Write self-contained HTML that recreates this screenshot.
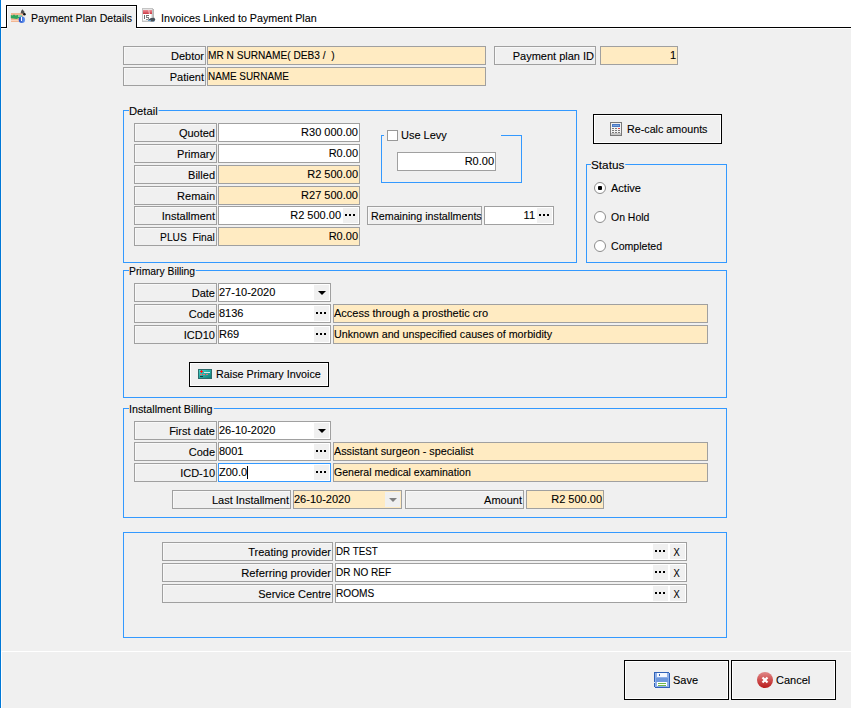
<!DOCTYPE html>
<html><head><meta charset="utf-8"><style>
*{margin:0;padding:0;box-sizing:border-box}
html,body{width:851px;height:708px;overflow:hidden;background:#f0f0f0;font-family:"Liberation Sans",sans-serif;font-size:11px;color:#000;-webkit-text-stroke:0.1px #000}
div{position:absolute}
.s{display:inline-block}
.lb{border:1px solid #a0a0a0;background:#f0f0f0;text-align:right;line-height:17px;padding-right:1px;padding-top:1px;white-space:nowrap;box-shadow:inset 1px 1px 0 #f8f8f8}
.vf{border:1px solid #a0a0a0;background:#fff;line-height:17px;white-space:nowrap;overflow:hidden}
.vf.pe{background:#ffebc2}
.vf.fo{border-color:#3399ff}
.tx{position:static;padding-left:0;padding-top:0}
.bt{top:1px;width:15px;height:15px;background:#f0f0f0}
.bt i{position:absolute;top:6px;width:2px;height:2px;background:#000}
.bt .arr{position:absolute;left:4px;top:6px;width:0;height:0;border-left:4px solid transparent;border-right:4px solid transparent;border-top:4px solid #000}
.bt .arr.g{border-top-color:#808080}
.bt.X{text-align:center;line-height:17px}
.bt.X span{display:inline-block;transform:scaleX(0.85);margin-left:-2px}
.gb{border:1px solid #3399ff}
.gt{line-height:13px;white-space:nowrap}
.gt>span{background:#f0f0f0;padding-right:1px;display:inline-block}
.btn{border:1px solid #000;background:#f0f0f0;box-shadow:inset 1px 1px 0 #fff, inset -1px -1px 0 #fff}
.bl{white-space:nowrap;line-height:13px}
.caret{display:inline-block;width:1px;height:13px;background:#000;vertical-align:-3px}
</style></head>
<body>
<div style="left:0;top:0;width:851px;height:27px;background:#fff"></div>
<div style="left:0;top:27px;width:851px;height:1px;background:#000"></div>
<div style="left:1px;top:28px;width:850px;height:1px;background:#fff"></div>
<div style="left:6px;top:5px;width:131px;height:23px;border:1px solid #000;border-bottom:none;background:#f0f0f0;box-shadow:inset 1px 1px 0 #fff"></div>
<div style="left:7px;top:27px;width:129px;height:2px;background:#f0f0f0"></div>
<div style="left:1px;top:28px;width:1px;height:624px;background:#f8f6f4"></div>
<div style="left:1px;top:651px;width:1px;height:57px;background:#fff"></div>
<div style="left:0;top:0;width:1px;height:708px;background:#0078d7"></div>
<div class="bl" style="left:31px;top:12px"><span class="s" style="transform:scaleX(0.96);transform-origin:left">Payment Plan Details</span></div>
<div class="bl" style="left:161px;top:12px"><span class="s" style="transform:scaleX(0.975);transform-origin:left">Invoices Linked to Payment Plan</span></div>
<svg style="position:absolute;left:9px;top:7px" width="18" height="18" viewBox="0 0 18 18" shape-rendering="crispEdges"><defs><linearGradient id="ib" x1="0" y1="0" x2="1" y2="0"><stop offset="0" stop-color="#1a46c0"/><stop offset="1" stop-color="#6c9ef6"/></linearGradient></defs><rect x="1.6" y="5.9" width="12.4" height="4" fill="#f2b794"/><rect x="1.6" y="9.9" width="8.6" height="5.2" fill="#f2b794"/><rect x="2" y="13" width="8" height="1" fill="#fbd6c0"/><path d="M1.8 8 L3.5 8.6 L5 7.6 L6.5 8.6 L8.5 7.9 L12.5 8 L12.5 10.3 L10 11 L7.5 12 L4.5 11.6 L1.8 11.2 Z" fill="#2fa65c" shape-rendering="auto"/><rect x="8.5" y="8.2" width="4" height="1.8" fill="#8ed3a6"/><path d="M13.4 2.2 L15.2 4.6 L15.8 7 L11.6 6.2 L12.2 4 Z" fill="#505050" shape-rendering="auto"/><circle cx="15.4" cy="7.2" r="1.3" fill="#111" shape-rendering="auto"/><circle cx="12.9" cy="12.8" r="3.2" fill="url(#ib)" shape-rendering="auto"/><rect x="12.2" y="11.2" width="1" height="2.6" fill="#fff"/><rect x="12.2" y="10.3" width="1" height="0.6" fill="#fff"/></svg>
<svg style="position:absolute;left:140px;top:6px" width="18" height="18" viewBox="0 0 18 18" shape-rendering="crispEdges"><defs><linearGradient id="cr" x1="0" y1="0" x2="0" y2="1"><stop offset="0" stop-color="#ec9098"/><stop offset="1" stop-color="#c8323c"/></linearGradient></defs><rect x="4" y="3" width="9.7" height="13.3" fill="#b8b8b8"/><rect x="2" y="1.8" width="10.5" height="14.5" fill="#c4c4c4"/><rect x="3" y="3" width="9" height="11.5" fill="#e6e6e6"/><rect x="3" y="3.8" width="8.7" height="4.6" fill="url(#cr)"/><path d="M8.2 3.8 L9.2 3.8 L10 8.4 L9 8.4 Z" fill="#f4c8cc" shape-rendering="auto"/><rect x="3" y="8.4" width="8" height="5.1" fill="#ffffff"/><rect x="4" y="9" width="1" height="4" fill="#707070"/><rect x="6" y="9" width="3" height="1" fill="#707070"/><rect x="6" y="10" width="1" height="1" fill="#909090"/><rect x="6" y="11" width="3" height="1" fill="#808080"/><rect x="8" y="12" width="1" height="1" fill="#909090"/><rect x="6" y="13" width="2" height="1" fill="#909090"/><path d="M8 13.8 L11 12 L14.3 11.8 L15.3 13.5 L14.3 15.6 L11.5 15.4 L9 14.8 Z" fill="#48525c" shape-rendering="auto"/><rect x="8.3" y="13.8" width="2.5" height="1" fill="#6a9cc4"/><rect x="12.5" y="14.6" width="1.5" height="1" fill="#6a9cc4"/></svg>
<div class="lb" style="left:123px;top:46px;width:83px;height:19px;">Debtor</div>
<div class="vf pe" style="left:207px;top:46px;width:279px;height:19px;"><div class="tx" style=""><span class="s" style="transform:scaleX(0.92);transform-origin:left">MR N SURNAME( DEB3 /&nbsp; )</span></div></div>
<div class="lb" style="left:123px;top:67px;width:83px;height:19px;">Patient</div>
<div class="vf pe" style="left:207px;top:67px;width:279px;height:19px;"><div class="tx" style=""><span class="s" style="transform:scaleX(0.9);transform-origin:left">NAME SURNAME</span></div></div>
<div class="lb" style="left:494px;top:46px;width:102px;height:19px;">Payment plan ID</div>
<div class="vf pe" style="left:600px;top:46px;width:78px;height:19px;"><div class="tx" style="text-align:right;padding-right:1px;">1</div></div>
<div class="gb" style="left:123px;top:110px;width:454px;height:153px;"></div>
<div class="gt" style="left:129px;top:105px"><span style="transform:scaleX(1.02);transform-origin:left">Detail</span></div>
<div class="lb" style="left:134px;top:123px;width:83px;height:19px;">Quoted</div>
<div class="vf" style="left:218px;top:123px;width:142px;height:19px;"><div class="tx" style="text-align:right;padding-right:1px;">R30 000.00</div></div>
<div class="lb" style="left:134px;top:144px;width:83px;height:19px;">Primary</div>
<div class="vf" style="left:218px;top:144px;width:142px;height:19px;"><div class="tx" style="text-align:right;padding-right:1px;">R0.00</div></div>
<div class="lb" style="left:134px;top:165px;width:83px;height:19px;">Billed</div>
<div class="vf pe" style="left:218px;top:165px;width:142px;height:19px;"><div class="tx" style="text-align:right;padding-right:1px;">R2 500.00</div></div>
<div class="lb" style="left:134px;top:186px;width:83px;height:19px;">Remain</div>
<div class="vf pe" style="left:218px;top:186px;width:142px;height:19px;"><div class="tx" style="text-align:right;padding-right:1px;">R27 500.00</div></div>
<div class="lb" style="left:134px;top:206px;width:83px;height:19px;">Installment</div>
<div class="vf" style="left:218px;top:206px;width:142px;height:19px;"><div class="tx" style="text-align:right;padding-right:18px;">R2 500.00</div><div class="bt" style="left:124px"><i style="left:2px"></i><i style="left:6px"></i><i style="left:10px"></i></div></div>
<div class="lb" style="left:134px;top:227px;width:83px;height:19px;"><span class="s" style="transform:scaleX(0.93);transform-origin:right">PLUS&nbsp; Final</span></div>
<div class="vf pe" style="left:218px;top:227px;width:142px;height:19px;"><div class="tx" style="text-align:right;padding-right:1px;">R0.00</div></div>
<div class="lb" style="left:367px;top:206px;width:115px;height:19px;"><span class="s" style="transform:scaleX(0.973);transform-origin:right">Remaining installments</span></div>
<div class="vf" style="left:484px;top:206px;width:70px;height:19px;"><div class="tx" style="text-align:right;padding-right:18px;">11</div><div class="bt" style="left:52px"><i style="left:2px"></i><i style="left:6px"></i><i style="left:10px"></i></div></div>
<div class="gb" style="left:381px;top:135px;width:141px;height:48px;"></div>
<div style="left:384px;top:129px;width:117px;height:12px;background:#f0f0f0"></div>
<div style="left:387px;top:130px;width:11px;height:11px;border:1px solid #999;background:#fff"></div>
<div class="bl" style="left:401px;top:129px">Use Levy</div>
<div class="vf" style="left:397px;top:152px;width:99px;height:19px;"><div class="tx" style="text-align:right;padding-right:1px;">R0.00</div></div>
<div class="btn" style="left:593px;top:114px;width:129px;height:30px;"></div>
<svg style="position:absolute;left:610px;top:122px" width="12" height="14" viewBox="0 0 12 14" shape-rendering="crispEdges"><rect x="0" y="0" width="12" height="14" fill="#787878"/><rect x="1" y="1" width="10" height="12" fill="#f2f2f2"/><rect x="1" y="11" width="10" height="2" fill="#c4c4c4"/><rect x="2" y="2" width="8" height="3" fill="#4a7ac4"/><rect x="3" y="3" width="6" height="1" fill="#7aa0dc"/><rect x="2" y="6" width="2" height="1" fill="#7a7a7a"/><rect x="5" y="6" width="2" height="1" fill="#7a7a7a"/><rect x="8" y="6" width="2" height="1" fill="#e04848"/><rect x="2" y="8" width="2" height="1" fill="#7a7a7a"/><rect x="5" y="8" width="2" height="1" fill="#7a7a7a"/><rect x="8" y="8" width="2" height="1" fill="#7a7a7a"/><rect x="2" y="10" width="2" height="1" fill="#7a7a7a"/><rect x="5" y="10" width="2" height="1" fill="#7a7a7a"/><rect x="8" y="10" width="2" height="1" fill="#7a7a7a"/></svg>
<div class="bl" style="left:627px;top:123px"><span class="s" style="transform:scaleX(0.975);transform-origin:left">Re-calc amounts</span></div>
<div class="gb" style="left:586px;top:164px;width:141px;height:99px;"></div>
<div class="gt" style="left:591px;top:159px"><span style="transform:scaleX(1.07);transform-origin:left">Status</span></div>
<div style="left:594px;top:182px;width:12px;height:12px;border:1px solid #8c8c8c;border-radius:50%;background:#fff"></div>
<div style="left:598px;top:186px;width:4px;height:4px;border-radius:1px;background:#000"></div>
<div class="bl" style="left:611px;top:182px">Active</div>
<div style="left:594px;top:211px;width:12px;height:12px;border:1px solid #8c8c8c;border-radius:50%;background:#fff"></div>
<div class="bl" style="left:611px;top:211px"><span class="s" style="transform:scaleX(0.95);transform-origin:left">On Hold</span></div>
<div style="left:594px;top:240px;width:12px;height:12px;border:1px solid #8c8c8c;border-radius:50%;background:#fff"></div>
<div class="bl" style="left:611px;top:240px"><span class="s" style="transform:scaleX(0.96);transform-origin:left">Completed</span></div>
<div class="gb" style="left:123px;top:270px;width:604px;height:128px;"></div>
<div class="gt" style="left:129px;top:265px"><span style="transform:scaleX(0.94);transform-origin:left">Primary Billing</span></div>
<div class="lb" style="left:134px;top:283px;width:83px;height:19px;">Date</div>
<div class="vf" style="left:218px;top:283px;width:113px;height:19px;"><div class="tx" style="">27-10-2020</div><div class="bt" style="left:95px"><b class="arr"></b></div></div>
<div class="lb" style="left:134px;top:304px;width:83px;height:19px;">Code</div>
<div class="vf" style="left:218px;top:304px;width:113px;height:19px;"><div class="tx" style="">8136</div><div class="bt" style="left:95px"><i style="left:2px"></i><i style="left:6px"></i><i style="left:10px"></i></div></div>
<div class="vf pe" style="left:333px;top:304px;width:375px;height:19px;"><div class="tx" style="">Access through a prosthetic cro</div></div>
<div class="lb" style="left:134px;top:325px;width:83px;height:19px;">ICD10</div>
<div class="vf" style="left:218px;top:325px;width:113px;height:19px;"><div class="tx" style="">R69</div><div class="bt" style="left:95px"><i style="left:2px"></i><i style="left:6px"></i><i style="left:10px"></i></div></div>
<div class="vf pe" style="left:333px;top:325px;width:375px;height:19px;"><div class="tx" style=""><span class="s" style="transform:scaleX(0.975);transform-origin:left">Unknown and unspecified causes of morbidity</span></div></div>
<div class="btn" style="left:189px;top:362px;width:140px;height:25px;"></div>
<svg style="position:absolute;left:198px;top:369px" width="14" height="10" viewBox="0 0 14 10" shape-rendering="crispEdges"><defs><linearGradient id="tg" x1="0" y1="0" x2="1" y2="1"><stop offset="0" stop-color="#44d4cc"/><stop offset="1" stop-color="#0e7c76"/></linearGradient></defs><rect x="0" y="0" width="14" height="10" fill="#2c6c6c"/><rect x="1" y="1" width="12" height="8" fill="url(#tg)"/><rect x="3" y="1" width="1" height="3" fill="#ff1414"/><rect x="2" y="2" width="3" height="1" fill="#ff1414"/><rect x="6" y="3" width="6" height="1" fill="#d4f2ee"/><rect x="2" y="5" width="2" height="1" fill="#e87070"/><rect x="5" y="5" width="2" height="1" fill="#e87070"/><rect x="8" y="5" width="2" height="1" fill="#e87070"/><rect x="2" y="7" width="3" height="1" fill="#0c4040"/></svg>
<div class="bl" style="left:216px;top:368px"><span class="s" style="transform:scaleX(0.98);transform-origin:left">Raise Primary Invoice</span></div>
<div class="gb" style="left:123px;top:408px;width:604px;height:110px;"></div>
<div class="gt" style="left:129px;top:403px"><span style="transform:scaleX(0.975);transform-origin:left">Installment Billing</span></div>
<div class="lb" style="left:134px;top:421px;width:83px;height:19px;">First date</div>
<div class="vf" style="left:218px;top:421px;width:113px;height:19px;"><div class="tx" style="">26-10-2020</div><div class="bt" style="left:95px"><b class="arr"></b></div></div>
<div class="lb" style="left:134px;top:442px;width:83px;height:19px;">Code</div>
<div class="vf" style="left:218px;top:442px;width:113px;height:19px;"><div class="tx" style="">8001</div><div class="bt" style="left:95px"><i style="left:2px"></i><i style="left:6px"></i><i style="left:10px"></i></div></div>
<div class="vf pe" style="left:333px;top:442px;width:375px;height:19px;"><div class="tx" style=""><span class="s" style="transform:scaleX(0.98);transform-origin:left">Assistant surgeon - specialist</span></div></div>
<div class="lb" style="left:134px;top:463px;width:83px;height:19px;">ICD-10</div>
<div class="vf fo" style="left:218px;top:463px;width:113px;height:19px;"><div class="tx" style="">Z00.0<span class="caret"></span></div><div class="bt" style="left:95px"><i style="left:2px"></i><i style="left:6px"></i><i style="left:10px"></i></div></div>
<div class="vf pe" style="left:333px;top:463px;width:375px;height:19px;"><div class="tx" style=""><span class="s" style="transform:scaleX(0.96);transform-origin:left">General medical examination</span></div></div>
<div class="lb" style="left:172px;top:490px;width:119px;height:19px;">Last Installment</div>
<div class="vf pe" style="left:293px;top:490px;width:109px;height:19px;"><div class="tx" style="">26-10-2020</div><div class="bt" style="left:91px"><b class="arr g"></b></div></div>
<div class="lb" style="left:405px;top:490px;width:119px;height:19px;">Amount</div>
<div class="vf pe" style="left:526px;top:490px;width:78px;height:19px;"><div class="tx" style="text-align:right;padding-right:1px;">R2 500.00</div></div>
<div class="gb" style="left:123px;top:532px;width:604px;height:106px;"></div>
<div class="lb" style="left:162px;top:542px;width:171px;height:19px;">Treating provider</div>
<div class="vf" style="left:335px;top:542px;width:352px;height:19px;"><div class="tx" style=""><span class="s" style="transform:scaleX(0.89);transform-origin:left">DR TEST</span></div><div class="bt X" style="left:334px"><span>X</span></div><div class="bt" style="left:317px"><i style="left:2px"></i><i style="left:6px"></i><i style="left:10px"></i></div></div>
<div class="lb" style="left:162px;top:563px;width:171px;height:19px;"><span class="s" style="transform:scaleX(1.02);transform-origin:right">Referring provider</span></div>
<div class="vf" style="left:335px;top:563px;width:352px;height:19px;"><div class="tx" style=""><span class="s" style="transform:scaleX(0.91);transform-origin:left">DR NO REF</span></div><div class="bt X" style="left:334px"><span>X</span></div><div class="bt" style="left:317px"><i style="left:2px"></i><i style="left:6px"></i><i style="left:10px"></i></div></div>
<div class="lb" style="left:162px;top:584px;width:171px;height:19px;">Service Centre</div>
<div class="vf" style="left:335px;top:584px;width:352px;height:19px;"><div class="tx" style=""><span class="s" style="transform:scaleX(0.92);transform-origin:left">ROOMS</span></div><div class="bt X" style="left:334px"><span>X</span></div><div class="bt" style="left:317px"><i style="left:2px"></i><i style="left:6px"></i><i style="left:10px"></i></div></div>
<div style="left:1px;top:651px;width:850px;height:1px;background:#fff"></div>
<div class="btn" style="left:624px;top:660px;width:105px;height:40px;"></div>
<svg style="position:absolute;left:654px;top:672px" width="16" height="16" viewBox="0 0 16 16" shape-rendering="crispEdges"><path d="M0 0 H14 L16 2 V16 H1 V15 H0 Z" fill="#2f62b8"/><rect x="1" y="1" width="14" height="14" fill="#8fb0e8"/><rect x="3" y="1" width="10" height="4" fill="#f4f8ff"/><rect x="5" y="2" width="1" height="2" fill="#3a68b8"/><rect x="2" y="6" width="12" height="4" fill="#6e98dc"/><rect x="3" y="10" width="10" height="4" fill="#ffffff"/><rect x="4" y="11" width="8" height="1" fill="#70b84a"/><rect x="4" y="13" width="8" height="1" fill="#70b84a"/><rect x="0" y="10" width="1" height="1" fill="#dfe6f0"/></svg>
<div class="bl" style="left:673px;top:674px">Save</div>
<div class="btn" style="left:731px;top:660px;width:105px;height:40px;"></div>
<svg style="position:absolute;left:757px;top:672px" width="16" height="16" viewBox="0 0 16 16" shape-rendering="crispEdges"><defs><linearGradient id="rg" x1="0" y1="0" x2="0" y2="1"><stop offset="0" stop-color="#e08a8a"/><stop offset="0.5" stop-color="#cf5050"/><stop offset="1" stop-color="#b81c1c"/></linearGradient></defs><circle cx="8" cy="8" r="8" fill="url(#rg)" shape-rendering="auto"/><path d="M5.5 5.5 L10.5 10.5 M10.5 5.5 L5.5 10.5" stroke="#fff" stroke-width="2.2" shape-rendering="auto"/></svg>
<div class="bl" style="left:776px;top:674px">Cancel</div>

</body></html>
